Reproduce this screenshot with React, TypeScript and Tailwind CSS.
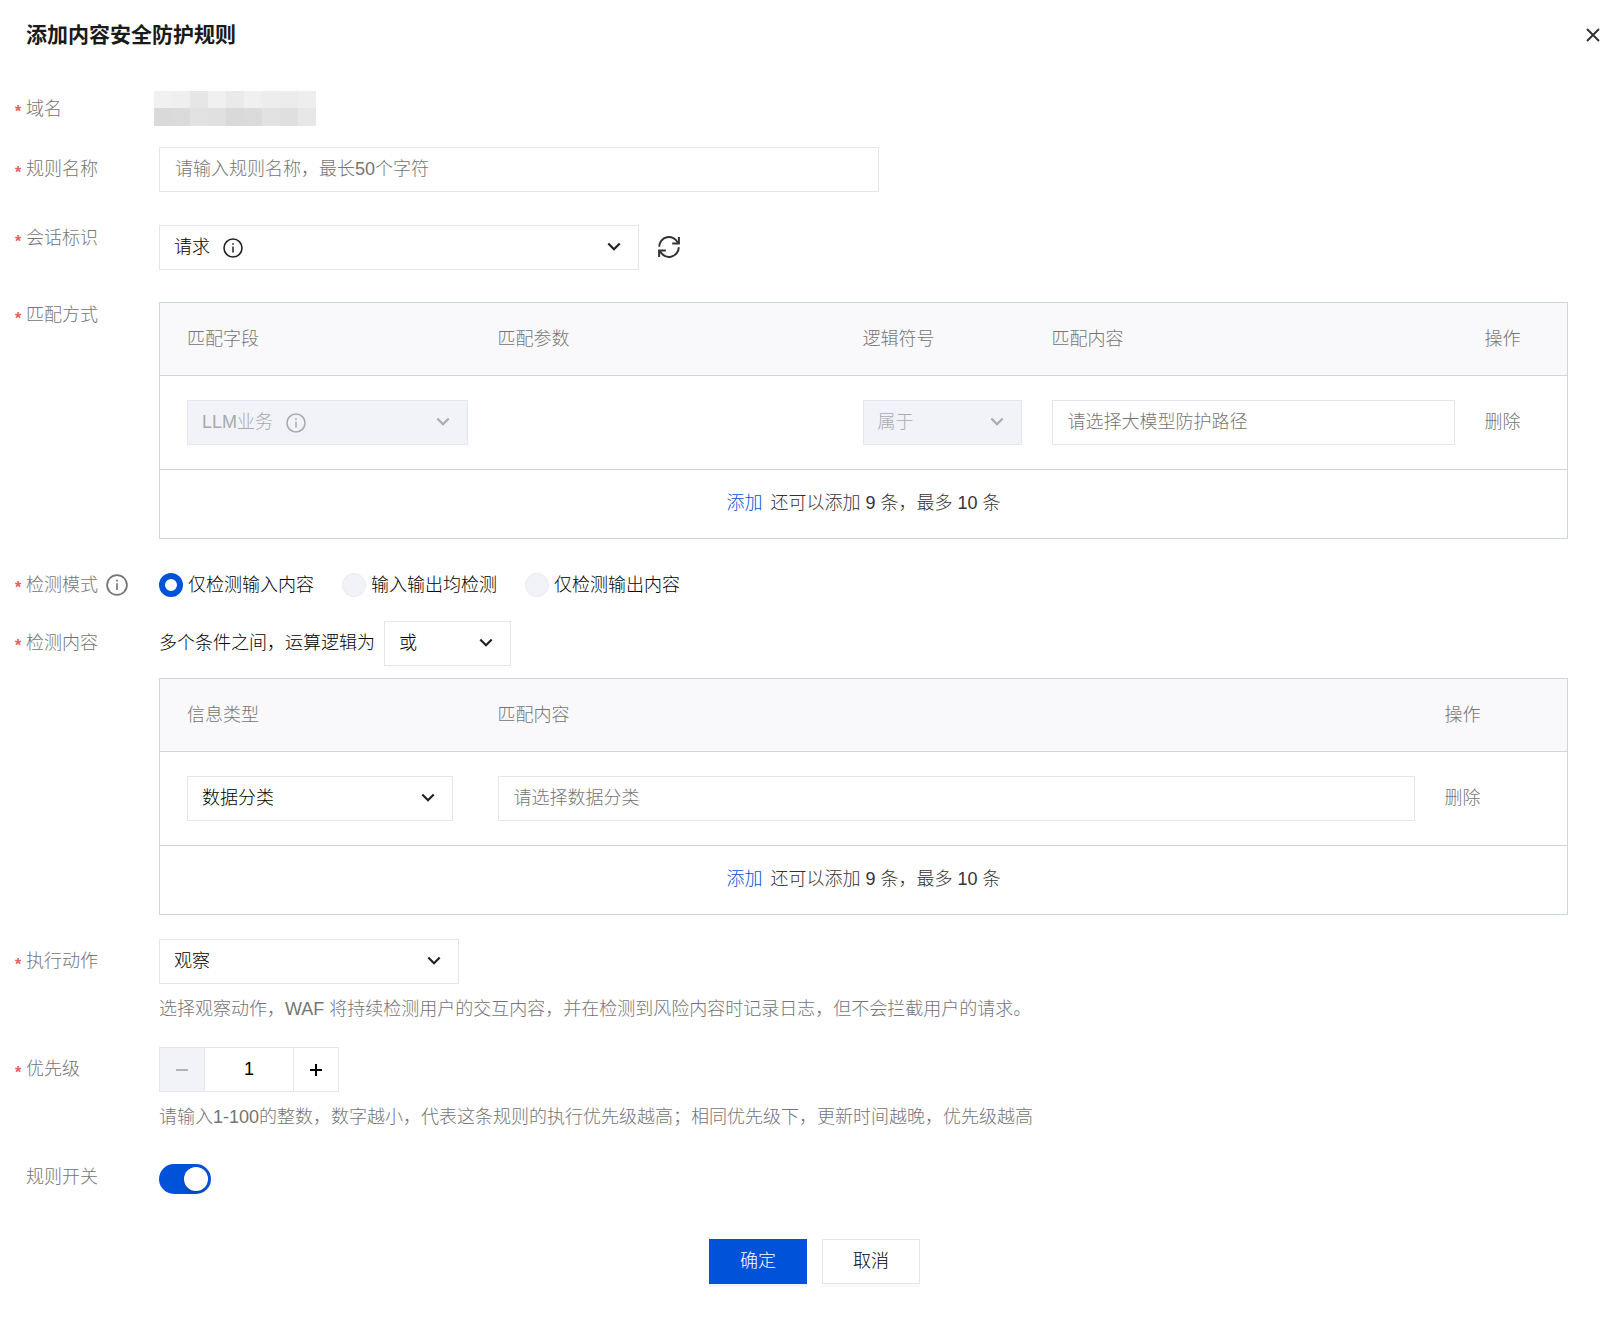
import { useState } from "react";
import type { ReactNode } from "react";
import clsx from "clsx";

const MASK = [
  ["#f1f1f1", "#efefef", "#e6e6e6", "#f0f0f0", "#eaeaea", "#f0f0f0", "#ededed", "#ececec", "#eeeeee"],
  ["#d9d9d9", "#dbdbdb", "#e2e2e2", "#e0e0e0", "#d9d9d9", "#dbdbdb", "#e2e2e2", "#dfdfdf", "#e7e7e7"],
];

const MODES = ["仅检测输入内容", "输入输出均检测", "仅检测输出内容"];

function InfoIcon({ className }: { className?: string }) {
  return (
    <svg viewBox="0 0 20 20" fill="none" stroke="currentColor" className={className} aria-hidden="true">
      <circle cx="10" cy="10" r="9" strokeWidth="1.6" />
      <path d="M10 8.5V14.5" strokeWidth="1.5" />
      <path d="M10 5.2V6.8" strokeWidth="1.6" />
    </svg>
  );
}

function Chevron() {
  return (
    <svg width="14" height="10" viewBox="0 0 14 10" fill="none" stroke="currentColor" strokeWidth="2.2" aria-hidden="true">
      <path d="M1.3 1.5L7 7.2L12.7 1.5" />
    </svg>
  );
}

interface SelectProps {
  id?: string;
  label?: string;
  value: string;
  className?: string;
  disabled?: boolean;
  info?: boolean;
}

function Select({ id, label, value, className, disabled, info }: SelectProps) {
  return (
    <div className={clsx("relative", disabled ? "text-[#a8aaaf]" : "text-[#222]", className)}>
      <select
        id={id}
        aria-label={label}
        disabled={disabled}
        className={clsx(
          "block h-[45px] w-full appearance-none border border-[#e3e6ee] pr-10 pl-[14px] opacity-100 outline-none focus:border-[#0052d9]",
          disabled ? "bg-[#f2f3f8]" : "bg-white text-black"
        )}
      >
        <option>{value}</option>
      </select>
      {info && (
        <span className="pointer-events-none absolute inset-y-0 left-4 flex items-center gap-3">
          <span className="invisible" aria-hidden="true">{value}</span>
          <InfoIcon className="size-5" />
        </span>
      )}
      <span className="pointer-events-none absolute inset-y-0 right-[18px] flex items-center pb-0.5">
        <Chevron />
      </span>
    </div>
  );
}

function TextInput({ id, label, placeholder }: { id?: string; label?: string; placeholder: string }) {
  return (
    <input
      id={id}
      type="text"
      aria-label={label}
      placeholder={placeholder}
      className="block h-[45px] w-full border border-[#e3e6ee] bg-white px-[15px] text-black outline-none placeholder:text-[#757575] focus:border-[#0052d9]"
    />
  );
}

interface RowProps {
  label: string;
  htmlFor?: string;
  required?: boolean;
  info?: boolean;
  className?: string;
  labelClass?: string;
  children: ReactNode;
}

function Row({ label, htmlFor, required = true, info, className, labelClass = "h-[27px]", children }: RowProps) {
  return (
    <div className={clsx("flex", className)}>
      <div className={clsx("flex w-36 shrink-0 items-center text-[#757575]", labelClass)}>
        <span className="w-[11px] pt-1.5 text-base leading-none font-bold text-[#e86060]">{required && "*"}</span>
        <label htmlFor={htmlFor}>{label}</label>
        {info && <InfoIcon className="ml-2 size-[22px]" />}
      </div>
      <div className="min-w-0 flex-1">{children}</div>
    </div>
  );
}

interface Column {
  title: string;
  width?: string;
  cell: ReactNode;
}

function RuleTable({ columns }: { columns: Column[] }) {
  return (
    <table className="w-full table-fixed border-collapse border border-[#cfd5de] text-left">
      <thead>
        <tr className="h-[73px] border-b border-[#cfd5de] bg-[#f9f9fc] text-[#757575]">
          {columns.map((col) => (
            <th key={col.title} className={clsx("px-[15px] font-light first:pl-[27px]", col.width)}>
              {col.title}
            </th>
          ))}
        </tr>
      </thead>
      <tbody>
        <tr className="h-[94px] border-b border-[#cfd5de]">
          {columns.map((col) => (
            <td key={col.title} className="px-[15px] first:pl-[27px]">
              {col.cell}
            </td>
          ))}
        </tr>
        <tr className="h-[69px]">
          <td colSpan={columns.length} className="pb-0.5 text-center text-[#333]">
            <button type="button" className="mr-2 text-[#0052d9]">添加</button>
            还可以添加 9 条，最多 10 条
          </td>
        </tr>
      </tbody>
    </table>
  );
}

const deleteButton = (
  <button type="button" className="block text-[#757575]">
    删除
  </button>
);

export default function App() {
  const [mode, setMode] = useState(MODES[0]);
  const [priority, setPriority] = useState(1);
  const [enabled, setEnabled] = useState(true);

  return (
    <div className="min-h-screen bg-white pb-[34px] font-['Liberation_Sans','Noto_Sans_CJK_SC',sans-serif] text-lg leading-[27px] font-light text-black">
      <header className="flex h-[70px] items-center justify-between pr-4 pl-[26px]">
        <h1 className="pb-0.5 text-[21px] font-bold text-[#1a1a1a]">添加内容安全防护规则</h1>
        <button type="button" aria-label="关闭" className="flex size-[14px] items-center justify-center text-[#333]">
          <svg width="14" height="14" viewBox="0 0 14 14" stroke="currentColor" strokeWidth="2" aria-hidden="true">
            <path d="M1 1L13 13M13 1L1 13" />
          </svg>
        </button>
      </header>

      <form className="pt-[21px]" onSubmit={(e) => e.preventDefault()}>
        <div className="pr-12 pl-[15px]">
          <Row label="域名" labelClass="h-9">
            <svg width="162" height="35" viewBox="0 0 162 35" className="-ml-[5px] block" shapeRendering="crispEdges" aria-hidden="true">
              {MASK.map((line, y) =>
                line.map((fill, x) => (
                  <rect key={`${x}-${y}`} x={x * 18} y={y * 17} width="18" height="18" fill={fill} />
                ))
              )}
            </svg>
          </Row>

          <Row label="规则名称" htmlFor="name" labelClass="h-[45px]" className="mt-5">
            <div className="max-w-[720px]">
              <TextInput id="name" placeholder="请输入规则名称，最长50个字符" />
            </div>
          </Row>

          <Row label="会话标识" htmlFor="session" className="mt-[33px]">
            <div className="flex items-center gap-[19px]">
              <Select id="session" value="请求" info className="w-[480px]" />
              <button type="button" aria-label="刷新" className="pb-0.5 text-[#333]">
                <svg width="22" height="22" viewBox="0 0 22 22" fill="none" stroke="currentColor" strokeWidth="2" aria-hidden="true">
                  <path d="M1.2 10.8A9.8 9.8 0 0 1 19.9 6.8" />
                  <path d="M20.9 1V7.6H14.2" />
                  <path d="M20.8 11.2A9.8 9.8 0 0 1 2.1 15.2" />
                  <path d="M1.1 21V14.4H7.8" />
                </svg>
              </button>
            </div>
          </Row>

          <Row label="匹配方式" className="mt-8">
            <RuleTable
              columns={[
                { title: "匹配字段", width: "w-[323px]", cell: <Select label="匹配字段" value="LLM业务" info disabled /> },
                { title: "匹配参数", width: "w-[365px]", cell: null },
                { title: "逻辑符号", width: "w-[189px]", cell: <Select label="逻辑符号" value="属于" disabled /> },
                { title: "匹配内容", cell: <TextInput label="匹配内容" placeholder="请选择大模型防护路径" /> },
                { title: "操作", width: "w-[98px]", cell: deleteButton },
              ]}
            />
          </Row>

          <Row label="检测模式" info labelClass="h-6" className="mt-[34px]">
            <div className="flex h-6 items-center gap-7">
              {MODES.map((item) => (
                <label key={item} className="flex items-center gap-[5px]">
                  <input
                    type="radio"
                    name="mode"
                    checked={mode === item}
                    onChange={() => setMode(item)}
                    className="size-6 appearance-none rounded-full border border-[#e7eaef] bg-[#f2f3f8] checked:border-6 checked:border-[#0052d9] checked:bg-white"
                  />
                  {item}
                </label>
              ))}
            </div>
          </Row>

          <Row label="检测内容" htmlFor="logic" labelClass="h-11" className="mt-6">
            <div className="mb-3 flex items-center gap-[9px]">
              <span>多个条件之间，运算逻辑为</span>
              <Select id="logic" value="或" className="w-[127px]" />
            </div>
            <RuleTable
              columns={[
                {
                  title: "信息类型",
                  width: "w-[323px]",
                  cell: <Select label="信息类型" value="数据分类" className="w-[266px]" />,
                },
                { title: "匹配内容", cell: <TextInput label="数据分类" placeholder="请选择数据分类" /> },
                { title: "操作", width: "w-[138px]", cell: deleteButton },
              ]}
            />
          </Row>

          <Row label="执行动作" htmlFor="action" labelClass="h-[45px]" className="mt-6">
            <Select id="action" value="观察" className="w-[300px]" />
            <p className="mt-3 text-[#757575]">
              选择观察动作，WAF 将持续检测用户的交互内容，并在检测到风险内容时记录日志，但不会拦截用户的请求。
            </p>
          </Row>

          <Row label="优先级" htmlFor="priority" labelClass="h-[45px]" className="mt-6">
            <div className="flex h-[45px] w-[180px] border border-[#e3e6ee]">
              <button
                type="button"
                aria-label="减少"
                disabled={priority <= 1}
                onClick={() => setPriority(priority - 1)}
                className="flex w-[45px] items-center justify-center border-r border-[#e3e6ee] disabled:bg-[#f2f3f8] disabled:text-[#b0b2b7]"
              >
                <svg width="12" height="12" viewBox="0 0 12 12" stroke="currentColor" strokeWidth="2" aria-hidden="true">
                  <path d="M0 6H12" />
                </svg>
              </button>
              <input
                id="priority"
                type="text"
                inputMode="numeric"
                value={priority}
                onChange={(e) => setPriority(Number(e.target.value) || 1)}
                className="min-w-0 flex-1 text-center outline-none"
              />
              <button
                type="button"
                aria-label="增加"
                onClick={() => setPriority(priority + 1)}
                className="flex w-[45px] items-center justify-center border-l border-[#e3e6ee]"
              >
                <svg width="12" height="12" viewBox="0 0 12 12" stroke="currentColor" strokeWidth="2" aria-hidden="true">
                  <path d="M0 6H12M6 0V12" />
                </svg>
              </button>
            </div>
            <p className="mt-3 text-[#757575]">
              请输入1-100的整数，数字越小，代表这条规则的执行优先级越高；相同优先级下，更新时间越晚，优先级越高
            </p>
          </Row>

          <Row label="规则开关" htmlFor="enabled" required={false} className="mt-[33px]">
            <input
              id="enabled"
              type="checkbox"
              role="switch"
              checked={enabled}
              onChange={(e) => setEnabled(e.target.checked)}
              className="flex h-[30px] w-[52px] appearance-none items-center rounded-full bg-[#c5c8d0] px-[3px] before:size-6 before:rounded-full before:bg-white before:shadow-md checked:justify-end checked:bg-[#0052d9]"
            />
          </Row>
        </div>

        <div className="mt-[45px] flex justify-center gap-[15px] pl-[13px]">
          <button type="submit" className="h-[45px] w-[98px] bg-[#0052d9] text-white shadow-[0_3px_0_#f0f5fd]">
            确定
          </button>
          <button type="button" className="h-[45px] w-[98px] border border-[#e3e6ee] bg-white shadow-[0_3px_0_#fafafa]">
            取消
          </button>
        </div>
      </form>
    </div>
  );
}
